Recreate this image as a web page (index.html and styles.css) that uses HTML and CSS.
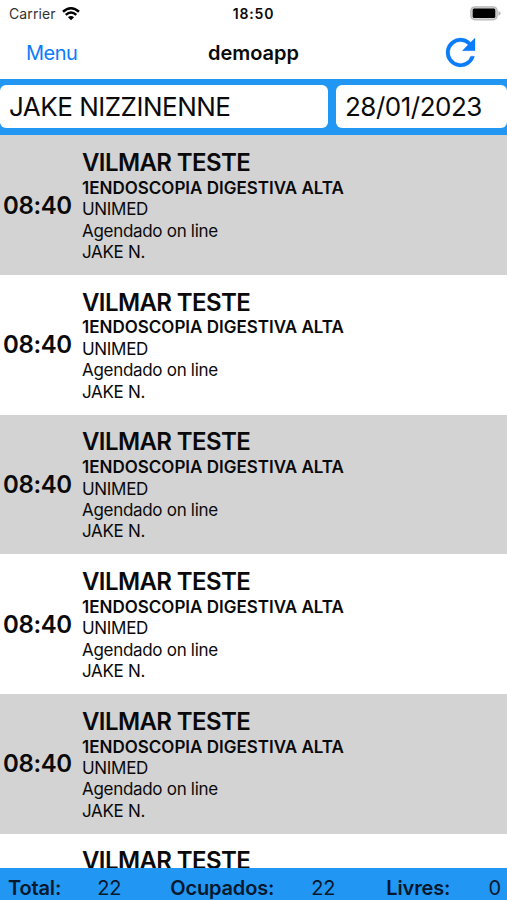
FILE: index.html
```html
<!DOCTYPE html>
<html lang="pt-BR">
<head>
    <meta charset="UTF-8">
    <meta name="viewport" content="width=device-width, initial-scale=1.0">
    <title>demoapp</title>
    <link rel="stylesheet" href="styles.css">
</head>
<body>
    <div class="status-bar">
        <div class="carrier">
            <span>Carrier</span>
            <svg class="wifi" viewBox="0 0 18 14" width="18" height="14">
                <path d="M1 4.8 Q9 -2.2 17 4.8" fill="none" stroke="#000" stroke-width="2.5"/>
                <path d="M3.7 7.9 Q9 3.1 14.3 7.9" fill="none" stroke="#000" stroke-width="2.4"/>
                <path d="M9 13.3 L5.9 10.2 Q9 7.6 12.1 10.2 Z" fill="#000"/>
            </svg>
        </div>
        <span class="clock">18:50</span>
        <svg class="battery" viewBox="0 0 31 15" width="31" height="15">
            <rect x="0.8" y="0.8" width="26.4" height="13" rx="4" fill="#d2d2d2" stroke="#b8b8b8" stroke-width="1.2"/>
            <rect x="2.7" y="2.6" width="22.6" height="9.4" rx="1.5" fill="#000"/>
            <path d="M28.4 4.9 Q30.6 5.6 30.6 7.3 T28.4 9.7 Z" fill="#b8b8b8"/>
        </svg>
    </div>

    <header class="navbar">
        <a class="menu">Menu</a>
        <h1>demoapp</h1>
        <svg class="refresh" viewBox="4 4 16 16" width="29" height="29">
            <path fill="#0a7bfa" stroke="#0a7bfa" stroke-width="0.15" d="M17.65 6.35A7.96 7.96 0 0 0 12 4a8 8 0 1 0 7.73 10h-2.08A6 6 0 1 1 12 6c1.66 0 3.14.69 4.22 1.78L13 11h7V4z"/>
        </svg>
    </header>

    <div class="filters">
        <div class="field doctor"><span>JAKE NIZZINENNE</span></div>
        <div class="field date"><span>28/01/2023</span></div>
    </div>

    <main class="list">
        <div class="row">
            <div class="time">08:40</div>
            <div class="info">
                <p class="name">VILMAR TESTE</p>
                <p class="exam">1ENDOSCOPIA DIGESTIVA ALTA</p>
                <p class="plan">UNIMED</p>
                <p class="status">Agendado on line</p>
                <p class="by">JAKE N.</p>
            </div>
        </div>
        <div class="row">
            <div class="time">08:40</div>
            <div class="info">
                <p class="name">VILMAR TESTE</p>
                <p class="exam">1ENDOSCOPIA DIGESTIVA ALTA</p>
                <p class="plan">UNIMED</p>
                <p class="status">Agendado on line</p>
                <p class="by">JAKE N.</p>
            </div>
        </div>
        <div class="row">
            <div class="time">08:40</div>
            <div class="info">
                <p class="name">VILMAR TESTE</p>
                <p class="exam">1ENDOSCOPIA DIGESTIVA ALTA</p>
                <p class="plan">UNIMED</p>
                <p class="status">Agendado on line</p>
                <p class="by">JAKE N.</p>
            </div>
        </div>
        <div class="row">
            <div class="time">08:40</div>
            <div class="info">
                <p class="name">VILMAR TESTE</p>
                <p class="exam">1ENDOSCOPIA DIGESTIVA ALTA</p>
                <p class="plan">UNIMED</p>
                <p class="status">Agendado on line</p>
                <p class="by">JAKE N.</p>
            </div>
        </div>
        <div class="row">
            <div class="time">08:40</div>
            <div class="info">
                <p class="name">VILMAR TESTE</p>
                <p class="exam">1ENDOSCOPIA DIGESTIVA ALTA</p>
                <p class="plan">UNIMED</p>
                <p class="status">Agendado on line</p>
                <p class="by">JAKE N.</p>
            </div>
        </div>
        <div class="row">
            <div class="time"></div>
            <div class="info">
                <p class="name">VILMAR TESTE</p>
            </div>
        </div>
    </main>

    <footer class="totals">
        <b>Total:</b><span class="total">22</span>
        <b>Ocupados:</b><span class="busy">22</span>
        <b>Livres:</b><span class="free">0</span>
    </footer>
</body>
</html>
```
FILE: styles.css
```css
* {
    box-sizing: border-box;
}
body {
    margin: 0;
    height: 900px;
    display: flex;
    flex-direction: column;
    overflow: hidden;
    background-color: #fff;
    color: #0a0a0a;
    font-family: Inter, "Liberation Sans", sans-serif;
}
p, h1 {
    margin: 0;
}
.status-bar {
    display: grid;
    grid-template-columns: 1fr auto 1fr;
    align-items: center;
    height: 27px;
    padding: 0 6px 0 9px;
    font-size: 14px;
    flex: none;
}
.carrier {
    display: flex;
    align-items: center;
    gap: 6px;
    color: #333;
    letter-spacing: 0.1px;
}
.clock {
    font-weight: 600;
    letter-spacing: 0.8px;
    margin-right: 3px;
}
.battery {
    justify-self: end;
}
.navbar {
    display: grid;
    grid-template-columns: 1fr auto 1fr;
    align-items: center;
    height: 52px;
    padding: 0 26px;
    flex: none;
}
.menu {
    color: #0a7bfa;
    font-size: 20px;
    letter-spacing: -0.5px;
}
.navbar h1 {
    font-size: 20px;
    font-weight: 600;
}
.refresh {
    justify-self: end;
    margin: 0 6px 2px 0;
    overflow: visible;
}
.filters {
    display: flex;
    gap: 8px;
    height: 56.2px;
    padding: 6px 0 7px;
    background-color: #2196f3;
    flex: none;
}
.field {
    display: flex;
    align-items: center;
    padding-left: 9px;
    background-color: #fff;
    border-radius: 6px;
    font-size: 26px;
    letter-spacing: -0.5px;
}
.doctor {
    width: 328px;
}
.date {
    flex: 1;
}
.list {
    flex: 1;
    overflow: hidden;
    min-height: 0;
}
.row {
    display: flex;
    height: 139.7px;
    padding-top: 12.8px;
}
.row:nth-child(odd) {
    background-color: #d3d3d3;
}
.time {
    width: 82px;
    padding: 42.7px 0 0 3px;
    font-size: 24px;
    font-weight: 600;
    line-height: 30px;
    letter-spacing: -0.4px;
}
.info {
    font-size: 17px;
    line-height: 21.4px;
    letter-spacing: -0.3px;
    white-space: nowrap;
}
.name {
    margin-bottom: 0.8px;
    font-size: 24px;
    font-weight: 600;
    line-height: 29px;
    letter-spacing: -0.6px;
}
.exam {
    font-weight: 600;
    letter-spacing: 0;
}
.totals {
    display: flex;
    height: 32px;
    padding: 4px 6px 0 8px;
    background-color: #2196f3;
    color: #06182c;
    font-size: 20px;
    line-height: 32px;
    letter-spacing: -0.15px;
    flex: none;
}
.totals b {
    font-weight: 600;
}
.total {
    width: 73px;
    margin-left: 36px;
}
.busy {
    margin-left: 37px;
    width: 75px;
}
.free {
    margin-left: auto;
}
```
